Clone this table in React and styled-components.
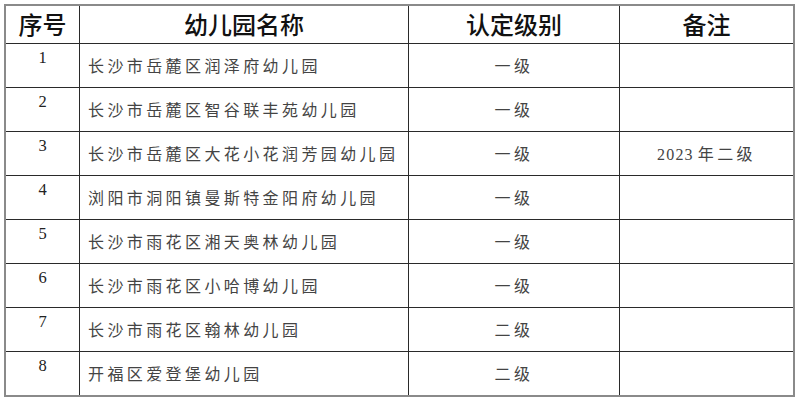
import React from 'react';
import styled, { createGlobalStyle } from 'styled-components';

const GlobalStyle = createGlobalStyle`
  html, body {
    margin: 0;
    padding: 0;
    background: #ffffff;
  }
  * {
    box-sizing: border-box;
  }
`;

const Page = styled.div`
  width: 800px;
  height: 400px;
  padding: 4px 0 0 4px;
  background: #fff;
`;

const Table = styled.div`
  display: grid;
  grid-template-columns: 74px 329px 211px 173px;
  grid-template-rows: 38px repeat(7, 44px) 43px;
  width: 791px;
  border: 2px solid #8a8a8a;
`;

const Cell = styled.div`
  display: flex;
  align-items: ${(p) => (p.$top ? 'flex-start' : 'center')};
  justify-content: ${(p) => (p.$left ? 'flex-start' : 'center')};
  border-right: ${(p) => (p.$lastCol ? 'none' : '1px solid #2a2a2a')};
  border-bottom: ${(p) => (p.$lastRow ? 'none' : '1px solid #2a2a2a')};
  overflow: hidden;
  white-space: nowrap;
`;

const HeadCell = styled(Cell)`
  font-family: "Noto Sans CJK SC", "Noto Sans", sans-serif;
  font-size: 24px;
  font-weight: 500;
  color: #111;
  padding-bottom: 2px;
`;

const NumCell = styled(Cell)`
  font-family: "Liberation Serif", serif;
  font-size: 16.5px;
  line-height: 18px;
  color: #222;
  padding-top: 5px;
`;

const BodyText = styled.span`
  font-family: "Liberation Serif", "Noto Sans CJK SC", serif;
  font-size: 16px;
  letter-spacing: 3.4px;
  color: #444;
  padding-left: ${(p) => (p.$indent ? '8px' : '0')};
  padding-bottom: 1px;
`;

const Digits = styled.span`
  letter-spacing: 1.2px;
  margin-right: 4px;
`;

const headers = ['序号', '幼儿园名称', '认定级别', '备注'];

const rows = [
  { name: '长沙市岳麓区润泽府幼儿园', level: '一级', note: '' },
  { name: '长沙市岳麓区智谷联丰苑幼儿园', level: '一级', note: '' },
  { name: '长沙市岳麓区大花小花润芳园幼儿园', level: '一级', note: ['2023', '年二级'] },
  { name: '浏阳市洞阳镇曼斯特金阳府幼儿园', level: '一级', note: '' },
  { name: '长沙市雨花区湘天奥林幼儿园', level: '一级', note: '' },
  { name: '长沙市雨花区小哈博幼儿园', level: '一级', note: '' },
  { name: '长沙市雨花区翰林幼儿园', level: '二级', note: '' },
  { name: '开福区爱登堡幼儿园', level: '二级', note: '' },
];

export default function App() {
  return (
    <Page>
      <GlobalStyle />
      <Table>
        {headers.map((h, i) => (
          <HeadCell key={h} $lastCol={i === headers.length - 1}>
            {h}
          </HeadCell>
        ))}
        {rows.map((r, i) => {
          const last = i === rows.length - 1;
          return (
            <React.Fragment key={r.name}>
              <NumCell $top $lastRow={last}>{i + 1}</NumCell>
              <Cell $left $lastRow={last}>
                <BodyText $indent>{r.name}</BodyText>
              </Cell>
              <Cell $lastRow={last}>
                <BodyText>{r.level}</BodyText>
              </Cell>
              <Cell $lastCol $lastRow={last}>
                {r.note && (
                  <BodyText>
                    <Digits>{r.note[0]}</Digits>
                    {r.note[1]}
                  </BodyText>
                )}
              </Cell>
            </React.Fragment>
          );
        })}
      </Table>
    </Page>
  );
}
